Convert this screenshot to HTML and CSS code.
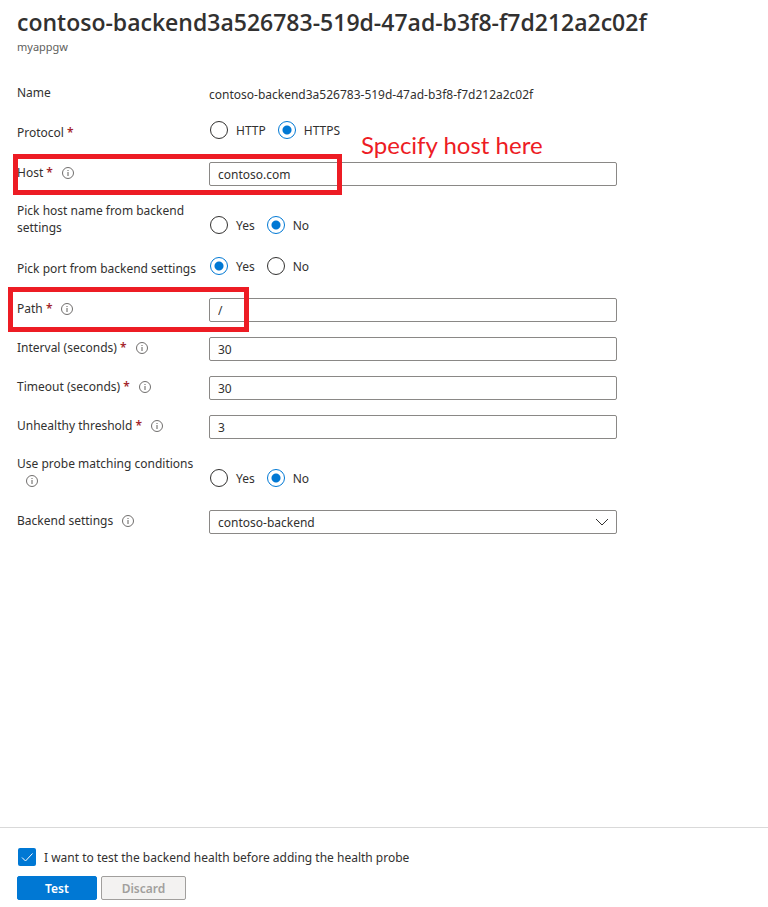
FILE: index.html
```html
<!DOCTYPE html>
<html lang="en">
<head>
<meta charset="utf-8">
<meta name="viewport" content="width=device-width, initial-scale=1">
<title>Health probe</title>
<link rel="stylesheet" href="styles.css">
</head>
<body>
<svg class="symbols" aria-hidden="true">
  <symbol id="info" viewBox="0 0 12 12">
    <circle cx="6" cy="6" r="5.5" fill="none" stroke="currentColor" stroke-width=".9"/>
    <path d="M6 5v4" stroke="currentColor"/>
    <path d="M6 3v1" stroke="currentColor"/>
  </symbol>
</svg>
<header class="header">
  <h1>contoso-backend3a526783-519d-47ad-b3f8-f7d212a2c02f</h1>
  <p class="subtitle">myappgw</p>
</header>
<form class="probe" id="probe">
  <div class="row row-text">
    <span class="label">Name</span>
    <span class="value">contoso-backend3a526783-519d-47ad-b3f8-f7d212a2c02f</span>
  </div>
  <div class="row row-radio" role="radiogroup" aria-labelledby="protocol">
    <span class="label" id="protocol">Protocol <b class="required">*</b></span>
    <div class="options">
      <label class="option"><input type="radio" name="protocol">HTTP</label>
      <label class="option"><input type="radio" name="protocol" checked>HTTPS</label>
    </div>
  </div>
  <div class="row row-field">
    <label class="label" for="host">Host <b class="required">*</b><svg class="info"><use href="#info"/></svg></label>
    <input class="field" id="host" type="text" value="contoso.com">
    <div class="highlight highlight-host"></div>
    <p class="note">Specify host here</p>
  </div>
  <div class="row row-tall" role="radiogroup" aria-labelledby="pick-host">
    <span class="label" id="pick-host">Pick host name from backend settings</span>
    <div class="options">
      <label class="option"><input type="radio" name="pick-host">Yes</label>
      <label class="option"><input type="radio" name="pick-host" checked>No</label>
    </div>
  </div>
  <div class="row row-radio" role="radiogroup" aria-labelledby="pick-port">
    <span class="label" id="pick-port">Pick port from backend settings</span>
    <div class="options">
      <label class="option"><input type="radio" name="pick-port" checked>Yes</label>
      <label class="option"><input type="radio" name="pick-port">No</label>
    </div>
  </div>
  <div class="row row-field">
    <label class="label" for="path">Path <b class="required">*</b><svg class="info"><use href="#info"/></svg></label>
    <input class="field" id="path" type="text" value="/">
    <div class="highlight highlight-path"></div>
  </div>
  <div class="row row-field">
    <label class="label" for="interval">Interval (seconds) <b class="required">*</b><svg class="info"><use href="#info"/></svg></label>
    <input class="field" id="interval" type="text" value="30">
  </div>
  <div class="row row-field">
    <label class="label" for="timeout">Timeout (seconds) <b class="required">*</b><svg class="info"><use href="#info"/></svg></label>
    <input class="field" id="timeout" type="text" value="30">
  </div>
  <div class="row row-field">
    <label class="label" for="threshold">Unhealthy threshold <b class="required">*</b><svg class="info"><use href="#info"/></svg></label>
    <input class="field" id="threshold" type="text" value="3">
  </div>
  <div class="row row-tall" role="radiogroup" aria-labelledby="matching">
    <span class="label" id="matching">Use probe matching conditions<svg class="info"><use href="#info"/></svg></span>
    <div class="options">
      <label class="option"><input type="radio" name="matching">Yes</label>
      <label class="option"><input type="radio" name="matching" checked>No</label>
    </div>
  </div>
  <div class="row row-field">
    <label class="label" for="backend">Backend settings<svg class="info"><use href="#info"/></svg></label>
    <div class="select">
      <select class="field" id="backend"><option>contoso-backend</option></select>
      <svg class="chevron" viewBox="0 0 14 8" aria-hidden="true"><path d="M1 1l6 6 6-6" fill="none" stroke="currentColor"/></svg>
    </div>
  </div>
</form>
<footer class="footer">
  <label class="consent">
    <span class="check">
      <input type="checkbox" checked>
      <svg viewBox="0 0 18 18" aria-hidden="true"><path d="M4 9.500l3.500 3.500 7-7.500" fill="none" stroke="currentColor"/></svg>
    </span>
    I want to test the backend health before adding the health probe
  </label>
  <div class="actions">
    <button class="button primary" type="submit" form="probe">Test</button>
    <button class="button" type="button" disabled>Discard</button>
  </div>
</footer>
</body>
</html>
```
FILE: styles.css
```css
* { box-sizing: border-box; }

body {
  display: flex;
  flex-direction: column;
  min-height: 100vh;
  margin: 0;
  background: #fff;
  color: #323130;
  font: 12px/17px "Noto Sans", "Open Sans", sans-serif;
}

h1, p { margin: 0; }

.symbols {
  position: absolute;
  width: 0;
  height: 0;
}

.header { padding: 6px 17px 0; }

h1 {
  font-family: "Open Sans", "Noto Sans", sans-serif;
  font-size: 23px;
  font-weight: 600;
  line-height: 32px;
}

.subtitle {
  color: #605e5c;
  font-size: 11px;
  line-height: 18px;
}

.probe {
  display: flex;
  flex: 1;
  flex-direction: column;
  gap: 15px;
  padding: 28px 17px 24px;
}

.row {
  position: relative;
  display: grid;
  grid-template-columns: 192px minmax(0, 408px);
  align-items: start;
}

.label { padding-right: 8px; }

.row-text { min-height: 22px; }
.row-radio { min-height: 26px; }
.row-tall { min-height: 41px; }
.row-tall .options { padding-top: 15px; }
.row-tall .label { padding-top: 1px; }
.row-radio .label { padding-top: 3px; }
.row-field .label { padding-top: 2px; }
.value { padding-top: 2px; }

.required {
  color: #a4262c;
  font-weight: 600;
}

.info {
  width: 12px;
  height: 12px;
  margin-left: 9px;
  color: #605e5c;
  vertical-align: -2px;
}

.options {
  display: flex;
  gap: 12px;
  padding-left: 1px;
}

.option {
  display: flex;
  align-items: center;
  gap: 8px;
  height: 18px;
}

.option input {
  appearance: none;
  width: 18px;
  height: 18px;
  margin: 0;
  border: 1px solid #323130;
  border-radius: 50%;
}

.option input:checked {
  border-color: #0078d4;
  background: radial-gradient(circle, #0078d4 4px, transparent 5px);
}

.field {
  appearance: none;
  display: block;
  width: 100%;
  height: 24px;
  margin: 0;
  padding: 0 8px;
  border: 1px solid #8a8886;
  border-radius: 2px;
  background: #fff;
  color: inherit;
  font: inherit;
}

.select { position: relative; }

.chevron {
  position: absolute;
  top: 8px;
  right: 8px;
  width: 14px;
  height: 8px;
  pointer-events: none;
}

.highlight {
  position: absolute;
  border: 5px solid #ed1c24;
  pointer-events: none;
}

.highlight-host {
  top: -8px;
  left: -4px;
  width: 329px;
  height: 41px;
}

.highlight-path {
  top: -11px;
  left: -9px;
  width: 241px;
  height: 45px;
}

.note {
  position: absolute;
  top: -32px;
  left: 344px;
  color: #ed1c24;
  font: 24px/30px Lato, sans-serif;
  white-space: nowrap;
}

.footer {
  padding: 20px 17px 7px;
  border-top: 1px solid #d9d9d9;
}

.consent {
  display: flex;
  align-items: center;
  gap: 8px;
  padding-left: 1px;
}

.check {
  position: relative;
  width: 18px;
  height: 18px;
}

.check input {
  appearance: none;
  display: block;
  width: 18px;
  height: 18px;
  margin: 0;
  border-radius: 2px;
  background: #0078d4;
}

.check svg {
  position: absolute;
  inset: 0;
  color: #fff;
}

.actions {
  display: flex;
  gap: 4px;
  margin-top: 10px;
}

.button {
  width: 85px;
  height: 24px;
  padding: 0;
  border: 1px solid #a19f9d;
  border-radius: 2px;
  background: #f3f2f1;
  color: #a19f9d;
  font: inherit;
  font-weight: 600;
}

.primary {
  width: 80px;
  border-color: #0078d4;
  background: #0078d4;
  color: #fff;
}
```
